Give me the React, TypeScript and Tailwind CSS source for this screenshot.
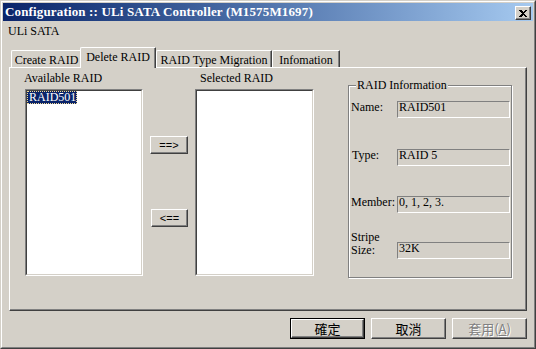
import React from "react";

const serif = "font-['Liberation_Serif','Times_New_Roman',serif]";
const cjk = "font-['Noto_Sans_CJK_TC','Noto_Sans_CJK_SC',sans-serif]";

function Btn({ children, className = "" }: { children: React.ReactNode; className?: string }) {
  return (
    <div
      className={
        "flex items-center justify-center bg-[#d4d0c8] border border-t-white border-l-white border-r-[#404040] border-b-[#404040] shadow-[inset_-1px_-1px_0_#808080] " +
        className
      }
    >
      {children}
    </div>
  );
}

function Field({ value }: { value: string }) {
  return (
    <div className="w-[113px] h-[17px] border border-t-[#808080] border-l-[#808080] border-r-white border-b-white bg-[#d4d0c8] pl-[1px] text-[12px] leading-[11px] text-black whitespace-nowrap">
      {value}
    </div>
  );
}

function ListBox({ children }: { children?: React.ReactNode }) {
  return (
    <div className="h-[187px] bg-white border border-t-[#808080] border-l-[#808080] border-r-white border-b-white">
      <div className="h-full border border-t-[#404040] border-l-[#404040] border-r-[#d4d0c8] border-b-[#d4d0c8]">
        {children}
      </div>
    </div>
  );
}

function Tab({ label, selected, className = "" }: { label: string; selected?: boolean; className?: string }) {
  return (
    <div
      className={
        "flex justify-center bg-[#d4d0c8] border-l border-t border-l-white border-t-white border-r border-r-[#404040] shadow-[inset_-1px_0_0_#808080] rounded-tl-[2px] rounded-tr-[1px] text-[12px] leading-[14px] whitespace-nowrap " +
        (selected ? "relative z-10 h-[21px] -mb-[1px] pt-[2px] " : "h-[17px] pt-[2px] ") +
        className
      }
    >
      {label}
    </div>
  );
}

export default function App() {
  return (
    <div className={"w-[536px] h-[349px] bg-[#d4d0c8] text-black " + serif}>
      <div className="w-full h-full border border-t-[#d4d0c8] border-l-[#d4d0c8] border-r-[#404040] border-b-[#404040]">
        <div className="w-full h-full border border-t-white border-l-white border-r-[#808080] border-b-[#808080] p-[1px] flex flex-col">
          {/* Title bar */}
          <div className="h-[18px] flex items-center bg-linear-to-r from-[#0a246a] to-[#a6caf0] pl-[2px] pr-[2px]">
            <div className="flex-1 text-white font-bold text-[13px] tracking-[0.15px] leading-[16px] whitespace-nowrap">
              Configuration :: ULi SATA Controller (M1575M1697)
            </div>
            <div className="mt-[2px] w-[16px] h-[14px] flex items-center justify-center bg-[#d4d0c8] border border-t-white border-l-white border-r-[#404040] border-b-[#404040] shadow-[inset_-1px_-1px_0_#808080]">
              <svg width="8" height="7" viewBox="0 0 8 7" shapeRendering="crispEdges">
                <path d="M0 0 H2 L4 2 L6 0 H8 L5 3.5 L8 7 H6 L4 5 L2 7 H0 L3 3.5 Z" fill="#000" />
              </svg>
            </div>
          </div>

          {/* Content */}
          <div className="flex flex-col pl-[6px] pr-[6px]">
            <div className="mt-[3px] h-[14px] -ml-[1px] text-[12px] leading-[14px]">ULi SATA</div>

            {/* Tabs */}
            <div className="mt-[9px] flex items-end pl-[2px] h-[20px]">
              <Tab label="Create RAID" className="w-[71px]" />
              <Tab label="Delete RAID" selected className="w-[76px] -ml-[2px]" />
              <Tab label="RAID Type Migration" className="w-[116px]" />
              <Tab label="Infomation" className="w-[68px]" />
            </div>

            {/* Panel */}
            <div className="h-[244px] border border-t-white border-l-white border-r-[#404040] border-b-[#404040] shadow-[inset_-1px_-1px_0_#808080] flex items-start pl-[15px] text-[12px]">
              {/* Available */}
              <div className="w-[118px] flex flex-col">
                <div className="mt-[3px] h-[14px] leading-[14px] -ml-[1px] whitespace-nowrap">Available RAID</div>
                <div className="mt-[4px]">
                  <ListBox>
                    <div className="w-[50px] h-[13px] bg-[#0a246a] border border-dotted border-[#f5db95] text-white leading-[11px] whitespace-nowrap pl-[1px]">
                      RAID501
                    </div>
                  </ListBox>
                </div>
              </div>

              {/* Arrows */}
              <div className="ml-[7px] w-[38px] flex flex-col pt-[68px]">
                <Btn className="h-[18px] text-[12px] leading-[12px]">
                  <span className="font-['Liberation_Sans',sans-serif] text-[11px]">==&gt;</span>
                </Btn>
                <Btn className="mt-[55px] h-[18px] text-[12px] leading-[12px] ml-[1px]">
                  <span className="font-['Liberation_Sans',sans-serif] text-[11px]">&lt;==</span>
                </Btn>
              </div>

              {/* Selected */}
              <div className="ml-[7px] w-[119px] flex flex-col">
                <div className="mt-[3px] h-[14px] leading-[14px] pl-[5px] whitespace-nowrap">Selected RAID</div>
                <div className="mt-[4px]">
                  <ListBox />
                </div>
              </div>

              {/* Group box */}
              <div className="ml-[34px] mt-[17px] w-[164px] h-[193px] relative border border-[#808080] shadow-[1px_1px_0_#fff,inset_1px_1px_0_#fff] pl-[2px] pt-[15px]">
                <div className="absolute -top-[8px] left-[7px] px-[1px] bg-[#d4d0c8] leading-[14px] whitespace-nowrap">
                  RAID Information
                </div>
                <div className="flex items-start">
                  <div className="w-[46px] pt-[1px] leading-[11px]">Name:</div>
                  <Field value="RAID501" />
                </div>
                <div className="mt-[31px] flex items-start">
                  <div className="w-[46px] pt-[1px] pl-[1px] leading-[11px]">Type:</div>
                  <Field value="RAID 5" />
                </div>
                <div className="mt-[30px] flex items-start">
                  <div className="w-[46px] pt-[1px] leading-[11px] whitespace-nowrap">Member:</div>
                  <Field value="0, 1, 2, 3." />
                </div>
                <div className="mt-[29px] flex items-start">
                  <div className="w-[46px] -mt-[11px] leading-[13px]">
                    Stripe
                    <br />
                    Size:
                  </div>
                  <Field value="32K" />
                </div>
              </div>
            </div>

            {/* Bottom buttons */}
            <div className="mt-[7px] flex justify-end gap-[6px]">
              <div className="w-[75px] h-[21px] border border-black">
                <Btn className={"w-full h-full text-[13px] leading-[13px] " + cjk}>確定</Btn>
              </div>
              <Btn className={"w-[75px] h-[21px] text-[13px] leading-[13px] " + cjk}>取消</Btn>
              <Btn className={"w-[75px] h-[21px] text-[13px] leading-[13px] text-[#808080] [text-shadow:1px_1px_0_#fff] " + cjk}>
                <span>
                  套用(<span className="underline">A</span>)
                </span>
              </Btn>
            </div>
          </div>
        </div>
      </div>
    </div>
  );
}
